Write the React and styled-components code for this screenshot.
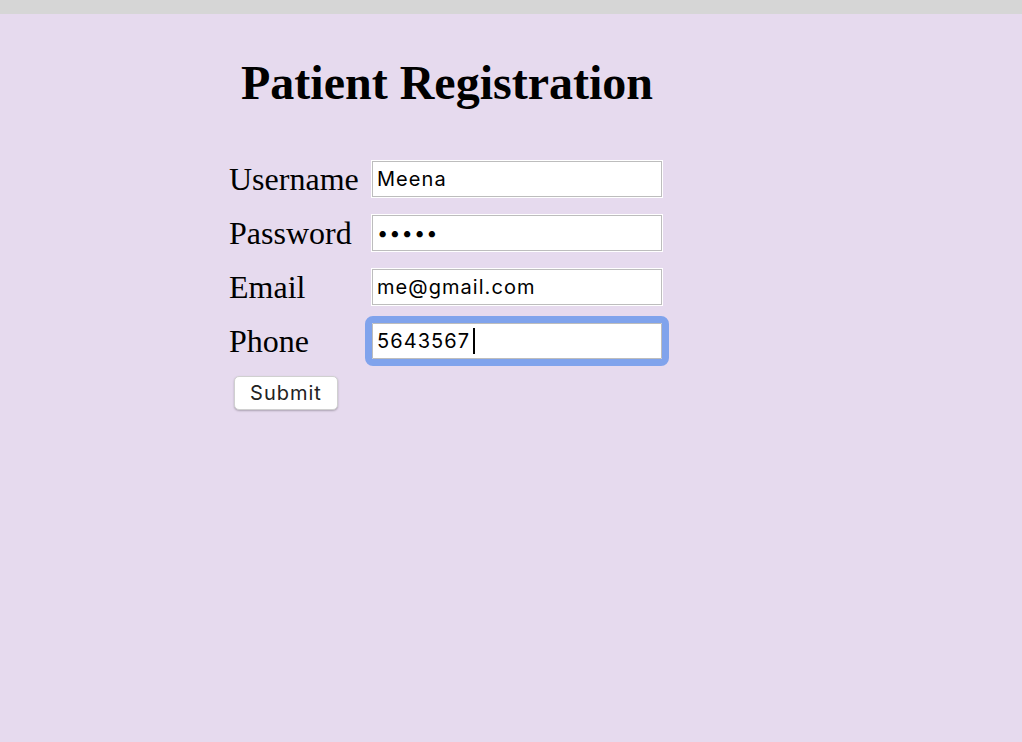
import React from "react";
import styled, { createGlobalStyle } from "styled-components";

const Global = createGlobalStyle`
  html, body { margin: 0; padding: 0; }
  body {
    background: #e6daee;
    font-family: "Liberation Serif", "Times New Roman", serif;
    color: #000;
  }
`;

const Page = styled.div`
  min-height: 742px;
  display: flex;
  flex-direction: column;
`;

const ChromeBar = styled.div`
  height: 14px;
  background: #d6d6d6;
  flex-shrink: 0;
`;

const Content = styled.main`
  padding: 41px 0 0 229px;
`;

const Panel = styled.div`
  width: 436px;
`;

const Title = styled.h1`
  margin: 0 0 50px;
  font-family: "Liberation Serif", "Times New Roman", serif;
  font-size: 48px;
  font-weight: bold;
  line-height: normal;
  text-align: center;
`;

const Form = styled.form`
  display: grid;
  grid-template-columns: 142px 292px;
  row-gap: 16px;
  align-items: center;
`;

const Label = styled.label`
  font-size: 32px;
  line-height: normal;
  white-space: nowrap;
`;

const Field = styled.div`
  position: relative;
  width: 292px;
  height: 38px;
`;

const Input = styled.input`
  box-sizing: border-box;
  display: block;
  width: 292px;
  height: 38px;
  margin: 0;
  padding: 0 4px 0 5px;
  background: #fff;
  border: 1px solid #fff;
  box-shadow: inset 0 0 0 1px #bdbdbd;
  font-family: Inter, "Liberation Sans", Arial, sans-serif;
  font-size: 20px;
  letter-spacing: 1.05px;
  color: #000;
  caret-color: transparent;
  border-radius: ${(p) => (p.$focused ? "2px" : "0")};
  outline: ${(p) => (p.$focused ? "7px solid #80a3ec" : "none")};
  outline-offset: -1px;
  &:focus {
    outline: 7px solid #80a3ec;
  }
`;

const Caret = styled.span`
  position: absolute;
  left: 102px;
  top: 6px;
  width: 2px;
  height: 26px;
  background: #000;
  pointer-events: none;
`;

const Button = styled.button`
  justify-self: start;
  margin-left: 5px;
  width: 104px;
  height: 34px;
  padding: 0;
  background: #fff;
  border: 1px solid #d0d0d0;
  border-radius: 5px;
  box-shadow: 0 1px 2px rgba(0, 0, 0, 0.25);
  font-family: Inter, "Liberation Sans", Arial, sans-serif;
  font-size: 20px;
  letter-spacing: 1px;
  color: #222;
`;

const fields = [
  { id: "username", label: "Username", type: "text", value: "Meena" },
  { id: "password", label: "Password", type: "password", value: "meena" },
  { id: "email", label: "Email", type: "email", value: "me@gmail.com" },
  { id: "phone", label: "Phone", type: "text", value: "5643567", focused: true },
];

export default function App() {
  return (
    <Page>
      <Global />
      <ChromeBar />
      <Content>
        <Panel>
          <Title>Patient Registration</Title>
          <Form onSubmit={(e) => e.preventDefault()}>
            {fields.map((f) => (
              <React.Fragment key={f.id}>
                <Label htmlFor={f.id}>{f.label}</Label>
                <Field>
                  <Input
                    id={f.id}
                    type={f.type}
                    defaultValue={f.value}
                    $focused={f.focused}
                  />
                  {f.focused && <Caret />}
                </Field>
              </React.Fragment>
            ))}
            <Button type="submit">Submit</Button>
          </Form>
        </Panel>
      </Content>
    </Page>
  );
}
